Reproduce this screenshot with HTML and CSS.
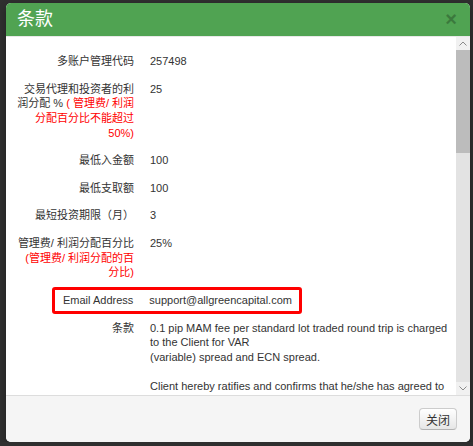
FILE: index.html
```html
<!DOCTYPE html>
<html>
<head>
    <title>条款</title>
    <link rel="stylesheet" href="styles.css">
</head>
<body>

    <!-- Ventana de condiciones -->
    <div class="modal">
        <div class="modal-header">
            <span class="close">&times;</span>
            <h3>条款</h3>
        </div>

        <div class="modal-main">
            <div class="modal-body">
                <div class="row">
                    <div class="label">多账户管理代码</div>
                    <div class="value">257498</div>
                </div>
                <div class="row">
                    <div class="label">交易代理和投资者的利润分配 % <span class="red">( 管理费/ 利润分配百分比不能超过50%)</span></div>
                    <div class="value">25</div>
                </div>
                <div class="row">
                    <div class="label">最低入金额</div>
                    <div class="value">100</div>
                </div>
                <div class="row">
                    <div class="label">最低支取额</div>
                    <div class="value">100</div>
                </div>
                <div class="row">
                    <div class="label">最短投资期限（月）</div>
                    <div class="value">3</div>
                </div>
                <div class="row">
                    <div class="label">管理费/ 利润分配百分比 <span class="red">(管理费/ 利润分配的百分比)</span></div>
                    <div class="value">25%</div>
                </div>
                <div class="row hl">
                    <div class="label">Email Address</div>
                    <div class="value">support@allgreencapital.com</div>
                </div>
                <div class="row">
                    <div class="label">条款</div>
                    <div class="value terms">0.1 pip MAM fee per standard lot traded round trip is charged to the Client for VAR
(variable) spread and ECN spread.

Client hereby ratifies and confirms that he/she has agreed to appoint the Money Manager to trade on his/her behalf and accepts all the risks involved in trading with leverage.</div>
                </div>
            </div>

            <!-- Barra de desplazamiento -->
            <div class="scrollbar">
                <div class="sb-btn">
                    <svg width="8" height="5" viewBox="0 0 8 5"><path d="M0.5 4.5L4 1L7.5 4.5" fill="none" stroke="#8a8a8a" stroke-width="1"/></svg>
                </div>
                <div class="sb-thumb"></div>
                <div class="sb-track"></div>
                <div class="sb-btn">
                    <svg width="8" height="5" viewBox="0 0 8 5"><path d="M0.5 0.5L4 4L7.5 0.5" fill="none" stroke="#8a8a8a" stroke-width="1"/></svg>
                </div>
            </div>
        </div>

        <div class="modal-footer">
            <button type="button" class="btn">关闭</button>
        </div>
    </div>

</body>
</html>
```

FILE: styles.css
```css
/* Fondo oscuro */
body {
    margin: 0;
    background-color: #2f2f2f;
    font-family: "Liberation Sans", Arial, "Noto Sans CJK SC", sans-serif;
    font-size: 11px;
    color: #333;
}

/* Ventana */
.modal {
    margin: 3px 3px 0 6px;
    height: 439px;
    background-color: #fff;
    border-radius: 5px;
    display: flex;
    flex-direction: column;
    overflow: hidden;
    box-shadow: 0 3px 7px rgba(0, 0, 0, 0.3);
}

.modal-header {
    background-color: #50a352;
    color: #fff;
    padding: 6px 13px 6px 11px;
    height: 21px;
    border-bottom: 1px solid #e8e8e8;
}

.modal-header h3 {
    margin: 0;
    font-size: 18px;
    font-weight: normal;
    line-height: 21px;
}

.close {
    float: right;
    font-size: 20px;
    font-weight: bold;
    line-height: 21px;
    color: #000;
    opacity: 0.25;
}

/* Contenido */
.modal-main {
    flex: 1;
    min-height: 0;
    display: flex;
}

.modal-body {
    flex: 1;
    overflow: hidden;
    padding: 17px 8px 10px 9px;
    line-height: 1.33;
}

.row {
    display: flex;
    gap: 16px;
    margin-bottom: 13px;
}

.label {
    width: 119px;
    flex-shrink: 0;
    text-align: right;
}

.value {
    flex: 1;
}

.red {
    color: #f00;
}

.terms {
    white-space: pre-line;
}

/* Fila resaltada */
.row.hl {
    width: fit-content;
    margin: -6px 0 7px 37px;
    padding: 3px 7px 3px 8px;
    border: 3px solid #f00;
    border-radius: 3px;
}

.row.hl .label {
    width: auto;
}

/* Barra de desplazamiento */
.scrollbar {
    width: 14px;
    display: flex;
    flex-direction: column;
    background-color: #e3e3e3;
}

.sb-btn {
    height: 13px;
    background-color: #f1f1f1;
    display: flex;
    align-items: center;
    justify-content: center;
}

.sb-thumb {
    height: 103px;
    background-color: #bcbcbc;
}

.sb-track {
    flex: 1;
}

/* Pie */
.modal-footer {
    background-color: #f5f5f5;
    border-top: 1px solid #ddd;
    padding: 12px 13px 12px 15px;
    text-align: right;
}

.btn {
    font-family: "Liberation Sans", Arial, "Noto Sans CJK SC", sans-serif;
    font-size: 12px;
    color: #333;
    padding: 2px 6px;
    height: 22px;
    background: linear-gradient(#fff, #e6e6e6);
    border: 1px solid #ccc;
    border-bottom-color: #b3b3b3;
    border-radius: 4px;
}
```
